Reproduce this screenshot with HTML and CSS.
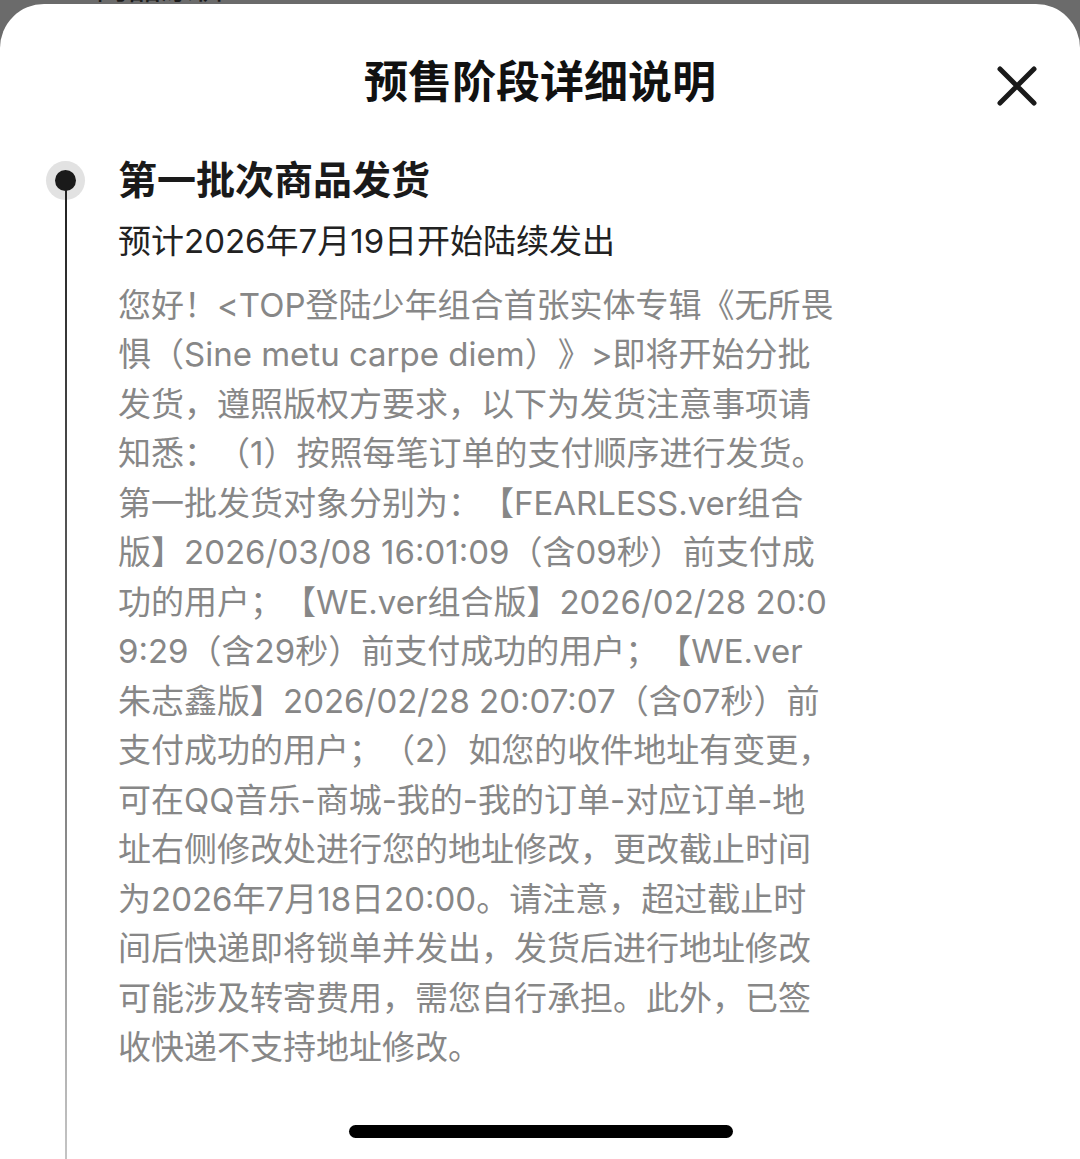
FILE: index.html
```html
<!DOCTYPE html>
<html lang="zh-CN">
<head>
  <meta charset="UTF-8">
  <title>预售阶段详细说明</title>
  <link rel="stylesheet" href="styles.css">
</head>
<body>

  <div class="under">
    <span>商品原价</span>
    <span>¥219.00</span>
  </div>

  <div class="sheet">
    <div class="sheet-head">
      <span></span>
      <h1>预售阶段详细说明</h1>
      <button class="close" aria-label="关闭">
        <svg width="40" height="40" viewBox="0 0 40 40">
          <path d="M3 3 L37 37 M37 3 L3 37" stroke="#1a1a1a" stroke-width="5" stroke-linecap="round" fill="none"/>
        </svg>
      </button>
    </div>

    <div class="stage">
      <div class="rail">
        <div class="dot"></div>
        <div class="line"></div>
      </div>
      <div class="stage-body">
        <h2>第一批次商品发货</h2>
        <p class="date">预计2026年7月19日开始陆续发出</p>
        <div class="desc">
          <div>您好！&lt;TOP登陆少年组合首张实体专辑《无所畏</div>
          <div>惧（Sine metu carpe diem）》&gt;即将开始分批</div>
          <div>发货，遵照版权方要求，以下为发货注意事项请</div>
          <div>知悉：（1）按照每笔订单的支付顺序进行发货。</div>
          <div>第一批发货对象分别为：【FEARLESS.ver组合</div>
          <div>版】2026/03/08 16:01:09（含09秒）前支付成</div>
          <div>功的用户；【WE.ver组合版】2026/02/28 20:0</div>
          <div>9:29（含29秒）前支付成功的用户；【WE.ver</div>
          <div>朱志鑫版】2026/02/28 20:07:07（含07秒）前</div>
          <div>支付成功的用户；（2）如您的收件地址有变更，</div>
          <div>可在QQ音乐-商城-我的-我的订单-对应订单-地</div>
          <div>址右侧修改处进行您的地址修改，更改截止时间</div>
          <div>为2026年7月18日20:00。请注意，超过截止时</div>
          <div>间后快递即将锁单并发出，发货后进行地址修改</div>
          <div>可能涉及转寄费用，需您自行承担。此外，已签</div>
          <div>收快递不支持地址修改。</div>
        </div>
      </div>
    </div>

    <div class="home-bar"></div>
  </div>

</body>
</html>
```

FILE: styles.css
```css
* {
  margin: 0;
  padding: 0;
  box-sizing: border-box;
}

body {
  width: 1080px;
  height: 1159px;
  overflow: hidden;
  background: #6b6b6b;
  font-family: Inter, "Noto Sans CJK SC", sans-serif;
  text-spacing-trim: space-all;
}

/* page behind the sheet, only the bottom of its text shows */
.under {
  height: 4px;
  overflow: hidden;
  display: flex;
  justify-content: space-between;
  padding: 0 95px;
  font-size: 33px;
  line-height: 33px;
  color: #1c1c1c;
}

.under span {
  margin-top: -29px;
}

.sheet {
  position: relative;
  height: 1155px;
  background: #fff;
  border-radius: 44px 44px 0 0;
  display: flex;
  flex-direction: column;
}

.sheet-head {
  height: 156px;
  display: grid;
  grid-template-columns: 1fr auto 1fr;
  align-items: center;
}

.sheet-head h1 {
  font-size: 44px;
  font-weight: 700;
  color: #111;
  line-height: 56px;
}

.close {
  justify-self: end;
  margin-right: 43px;
  margin-top: 8px;
  width: 40px;
  height: 40px;
  border: none;
  background: none;
  display: flex;
}

.stage {
  flex: 1;
  display: flex;
  padding-left: 46px;
  gap: 33px;
}

.rail {
  width: 39px;
  display: flex;
  flex-direction: column;
  align-items: center;
  padding-top: 1px;
}

.dot {
  width: 39px;
  height: 39px;
  border-radius: 50%;
  background: #e2e2e2;
  display: flex;
  align-items: center;
  justify-content: center;
}

.dot::after {
  content: "";
  width: 21px;
  height: 21px;
  border-radius: 50%;
  background: #1a1a1a;
}

.line {
  flex: 1;
  width: 2px;
  margin-top: -10px;
  background: linear-gradient(#222, #5a5a5a 40%, #c4c4c4);
}

.stage-body h2 {
  font-size: 39px;
  font-weight: 700;
  color: #1a1a1a;
  line-height: 40px;
}

.date {
  margin-top: 17px;
  font-size: 33px;
  line-height: 49.5px;
  color: #222;
}

.desc {
  margin-top: 14px;
  font-size: 33px;
  line-height: 49.5px;
  color: #878787;
  white-space: nowrap;
}

.home-bar {
  position: absolute;
  left: 349px;
  bottom: 21px;
  width: 384px;
  height: 13px;
  border-radius: 7px;
  background: #000;
}
```
